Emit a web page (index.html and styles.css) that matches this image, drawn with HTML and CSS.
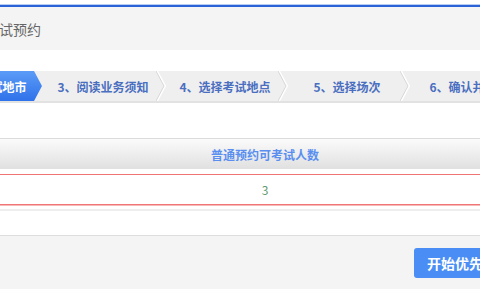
FILE: index.html
```
<!DOCTYPE html>
<html lang="zh-CN">
<head>
<meta charset="utf-8">
<link rel="stylesheet" href="styles.css">
</head>
<body>
<div class="page">
  <div class="topline"></div>
  <div class="titlebar"><span class="title">考试预约</span></div>
  <div class="steps">
    <div class="step active">2、选择考试地市</div>
    <div class="step">3、阅读业务须知<svg class="sep" viewBox="0 0 10 30" width="10" height="30"><polyline points="1,0 9,15 1,30" fill="none" stroke="#ffffff" stroke-width="2"/><polyline points="0,0 8,15 0,30" fill="none" stroke="#d6d6d6" stroke-width="1"/></svg></div>
    <div class="step">4、选择考试地点<svg class="sep" viewBox="0 0 10 30" width="10" height="30"><polyline points="1,0 9,15 1,30" fill="none" stroke="#ffffff" stroke-width="2"/><polyline points="0,0 8,15 0,30" fill="none" stroke="#d6d6d6" stroke-width="1"/></svg></div>
    <div class="step">5、选择场次<svg class="sep" viewBox="0 0 10 30" width="10" height="30"><polyline points="1,0 9,15 1,30" fill="none" stroke="#ffffff" stroke-width="2"/><polyline points="0,0 8,15 0,30" fill="none" stroke="#d6d6d6" stroke-width="1"/></svg></div>
    <div class="step">6、确认并提交</div>
  </div>
  <div class="grid">
    <div class="grid-head">普通预约可考试人数</div>
    <div class="grid-row">3</div>
    <div class="grid-end"></div>
  </div>
  <div class="footer">
    <button class="btn">开始优先预约</button>
  </div>
</div>
</body>
</html>
```
FILE: styles.css
```
html, body {
  margin: 0;
  padding: 0;
  background: #ffffff;
  overflow: hidden;
}
body {
  font-family: "Noto Sans CJK SC", "Noto Sans", sans-serif;
  width: 480px;
  height: 300px;
}
.page {
  width: 600px;
  margin-left: -35px;
  padding-top: 4px;
}
.topline {
  height: 2px;
  border-top: 1px solid #b7cdf2;
  background: #2c62d8;
}
.titlebar {
  height: 43px;
  background: #f4f4f4;
  display: flex;
  align-items: center;
  padding-left: 20px;
}
.title {
  font-size: 14px;
  color: #666666;
}
.steps {
  margin-top: 21px;
  margin-left: -45px;
  height: 30px;
  background: #efefef;
  border-bottom: 2px solid #e2e2e2;
  display: flex;
}
.step {
  position: relative;
  width: 122px;
  flex: none;
  display: flex;
  align-items: center;
  justify-content: center;
  font-size: 12px;
  font-weight: bold;
  color: #4a6ec0;
  white-space: nowrap;
}
.step.active {
  width: 122px;
  color: #ffffff;
  background: linear-gradient(#5c9bf7, #2f72ea);
  clip-path: polygon(0 0, 114px 0, 122px 50%, 114px 100%, 0 100%);
}
.sep {
  position: absolute;
  right: -2px;
  top: 0;
}
.grid {
  margin-top: 35px;
}
.grid-head {
  height: 30px;
  border-top: 1px solid #dcdcdc;
  background: linear-gradient(#fbfbfb, #e0e0e0);
  display: flex;
  align-items: center;
  justify-content: center;
  font-size: 12px;
  font-weight: bold;
  color: #5a8ff0;
}
.grid-row {
  margin-top: 5px;
  height: 29px;
  border-top: 1px solid #f07474;
  border-bottom: 1px solid #f07474;
  box-shadow: 0 1px 0 #f8b8b8;
  display: flex;
  align-items: center;
  justify-content: center;
  font-size: 12px;
  color: #5f9a70;
}
.grid-end {
  margin-top: 4px;
  height: 2px;
  background: #eeeeee;
}
.footer {
  margin-top: 24px;
  height: 54px;
  border-top: 1px solid #dddddd;
  background: #f4f4f4;
  display: flex;
  align-items: center;
  padding-left: 449px;
  padding-top: 1px;
  box-sizing: border-box;
}
.btn {
  height: 30px;
  width: 110px;
  border: none;
  border-radius: 3px;
  background: #4a8ef5;
  color: #ffffff;
  font-family: "Noto Sans CJK SC", sans-serif;
  font-size: 14px;
  font-weight: bold;
  text-align: left;
  padding-left: 13px;
}
```
